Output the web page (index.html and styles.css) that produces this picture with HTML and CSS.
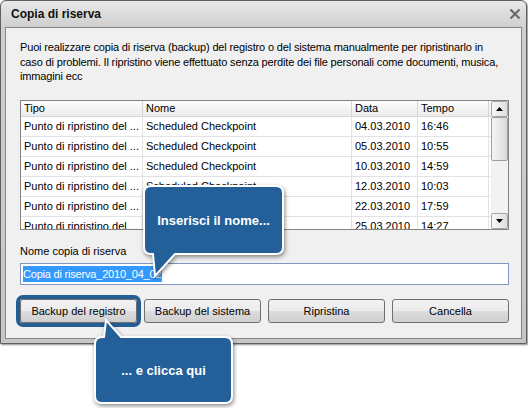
FILE: index.html
```html
<!DOCTYPE html>
<html lang="it">
<head>
    <meta charset="UTF-8">
    <meta name="viewport" content="width=device-width, initial-scale=1.0">
    <title>Copia di riserva</title>
    <link rel="stylesheet" href="styles.css">
</head>
<body>
    <div class="window">
        <div class="titlebar">
            <span class="title">Copia di riserva</span>
            <svg class="close" width="12" height="12" viewBox="0 0 12 12">
                <path d="M1.5 1.5L10.5 10.5M10.5 1.5L1.5 10.5" stroke="#6b6b6b" stroke-width="2.2"/>
            </svg>
        </div>
        <div class="client">
            <p class="intro">Puoi realizzare copia di riserva (backup) del registro o del sistema manualmente per ripristinarlo in caso di problemi. Il ripristino viene effettuato senza perdite dei file personali come documenti, musica, immagini ecc</p>

            <!-- Restore points -->
            <div class="list">
                <div class="list-body">
                    <div class="row head"><div>Tipo</div><div>Nome</div><div>Data</div><div>Tempo</div><div></div></div>
                    <div class="row"><div>Punto di ripristino del ...</div><div>Scheduled Checkpoint</div><div>04.03.2010</div><div>16:46</div><div></div></div>
                    <div class="row"><div>Punto di ripristino del ...</div><div>Scheduled Checkpoint</div><div>05.03.2010</div><div>10:55</div><div></div></div>
                    <div class="row"><div>Punto di ripristino del ...</div><div>Scheduled Checkpoint</div><div>10.03.2010</div><div>14:59</div><div></div></div>
                    <div class="row"><div>Punto di ripristino del ...</div><div>Scheduled Checkpoint</div><div>12.03.2010</div><div>10:03</div><div></div></div>
                    <div class="row"><div>Punto di ripristino del ...</div><div>Scheduled Checkpoint</div><div>22.03.2010</div><div>17:59</div><div></div></div>
                    <div class="row"><div>Punto di ripristino del ...</div><div>Scheduled Checkpoint</div><div>25.03.2010</div><div>14:27</div><div></div></div>
                </div>
                <div class="scrollbar">
                    <div class="sb-btn"><svg width="7" height="4" viewBox="0 0 7 4"><path d="M0 4L3.5 0L7 4Z" fill="#000"/></svg></div>
                    <div class="sb-thumb"></div>
                    <div class="sb-track"></div>
                    <div class="sb-btn"><svg width="7" height="4" viewBox="0 0 7 4"><path d="M0 0L3.5 4L7 0Z" fill="#000"/></svg></div>
                </div>
            </div>

            <!-- Backup name -->
            <div class="field-label">Nome copia di riserva</div>
            <div class="name-input"><span class="selected">Copia di riserva_2010_04_02</span></div>

            <div class="actions">
                <button class="btn marked">Backup del registro</button>
                <button class="btn">Backup del sistema</button>
                <button class="btn">Ripristina</button>
                <button class="btn">Cancella</button>
            </div>
        </div>
    </div>

    <!-- Hints -->
    <div class="callout hint-name">
        <svg width="150" height="100" viewBox="0 0 150 100">
            <path d="M11 4H136Q143 4 143 11V65Q143 72 136 72H35L15 94L13 72H11Q4 72 4 65V11Q4 4 11 4Z" fill="#23609a" stroke="#fff" stroke-width="2"/>
        </svg>
        <span>Inserisci il nome...</span>
    </div>
    <div class="callout hint-click">
        <svg width="150" height="94" viewBox="0 0 150 94">
            <path d="M5 30Q5 23 12 23H14L16 6L31 23H135Q142 23 142 30V82Q142 89 135 89H12Q5 89 5 82Z" fill="#23609a" stroke="#fff" stroke-width="2"/>
        </svg>
        <span>... e clicca qui</span>
    </div>
</body>
</html>
```

FILE: styles.css
```css
* {
    box-sizing: border-box;
}
body {
    margin: 0;
    height: 408px;
    overflow: hidden;
    position: relative;
    background: #fff;
    font-family: "Liberation Sans", Arial, sans-serif;
    font-size: 11px;
    color: #000;
}
.window {
    width: 527px;
    height: 344px;
    border: 1px solid #5f5f5f;
    border-radius: 6px 6px 0 0;
    background: linear-gradient(#e8e8e8, #cfcfcf 26px, #c6c6c6);
    padding: 0 4px 4px;
    box-shadow: 1px 1px 2px rgba(0, 0, 0, 0.45);
    display: flex;
    flex-direction: column;
}
.titlebar {
    height: 26px;
    display: flex;
    align-items: center;
    justify-content: space-between;
    padding: 0 1px 0 6px;
}
.title {
    font-weight: bold;
    font-size: 12px;
    color: #111;
}
.client {
    flex: 1;
    border: 1px solid #868686;
    background: #f0f0f0;
    padding: 12px 12px 0 14px;
}
.intro {
    margin: 0;
    max-width: 481px;
    line-height: 14.5px;
    letter-spacing: -0.15px;
}
.list {
    margin-top: 16px;
    height: 130px;
    border: 1px solid #828282;
    background: #fff;
    display: flex;
}
.list-body {
    flex: 1;
    overflow: hidden;
}
.row {
    display: grid;
    grid-template-columns: 122px 209px 66px 71px 1fr;
    height: 20px;
}
.row > div {
    border-right: 1px solid #e2e2e2;
    border-bottom: 1px solid #e2e2e2;
    padding: 0 3px;
    line-height: 19px;
    white-space: nowrap;
    overflow: hidden;
}
.row.head {
    height: 16px;
}
.row.head > div {
    background: linear-gradient(#fdfdfd, #ececec);
    border-color: #d5d5d5;
    line-height: 15px;
}
.scrollbar {
    width: 17px;
    display: flex;
    flex-direction: column;
    background: #f2f2f2;
}
.sb-btn {
    height: 16px;
    border: 1px solid #a6a6a6;
    border-radius: 2px;
    background: linear-gradient(90deg, #f8f8f8, #dedede);
    display: flex;
    align-items: center;
    justify-content: center;
}
.sb-thumb {
    height: 44px;
    border: 1px solid #9e9e9e;
    border-radius: 2px;
    background: linear-gradient(90deg, #f6f6f6, #d9d9d9);
}
.sb-track {
    flex: 1;
}
.field-label {
    margin-top: 14px;
    line-height: 14px;
}
.name-input {
    margin-top: 5px;
    height: 22px;
    border: 1px solid #7f97bf;
    background: #fff;
    padding: 0 2px;
    display: flex;
    align-items: center;
}
.selected {
    background: #3399ff;
    color: #fff;
    font-size: 11px;
    letter-spacing: -0.2px;
    line-height: 16px;
    border-right: 1px solid #e8742a;
}
.actions {
    margin-top: 14px;
    display: grid;
    grid-template-columns: repeat(4, 1fr);
    gap: 7px;
}
.btn {
    height: 24px;
    border: 1px solid #707070;
    border-radius: 3px;
    background: linear-gradient(#f2f2f2, #ebebeb 50%, #dddddd 50%, #cfcfcf);
    font-family: "Liberation Sans", Arial, sans-serif;
    font-size: 11px;
    color: #000;
    padding: 0;
}
.btn.marked {
    outline: 4px solid #245e93;
    outline-offset: 0;
}
.callout {
    position: absolute;
}
.callout svg {
    position: absolute;
    left: 0;
    top: 0;
    filter: drop-shadow(1px 2px 2px rgba(0, 0, 0, 0.45));
}
.callout span {
    position: absolute;
    display: flex;
    align-items: center;
    justify-content: center;
    color: #fff;
    font-weight: bold;
    font-size: 13px;
}
.hint-name {
    left: 140px;
    top: 182px;
    width: 150px;
    height: 100px;
}
.hint-name span {
    left: 4px;
    top: 4px;
    width: 139px;
    height: 68px;
}
.hint-click {
    left: 90px;
    top: 314px;
    width: 150px;
    height: 94px;
}
.hint-click span {
    left: 5px;
    top: 23px;
    width: 137px;
    height: 66px;
}
```
